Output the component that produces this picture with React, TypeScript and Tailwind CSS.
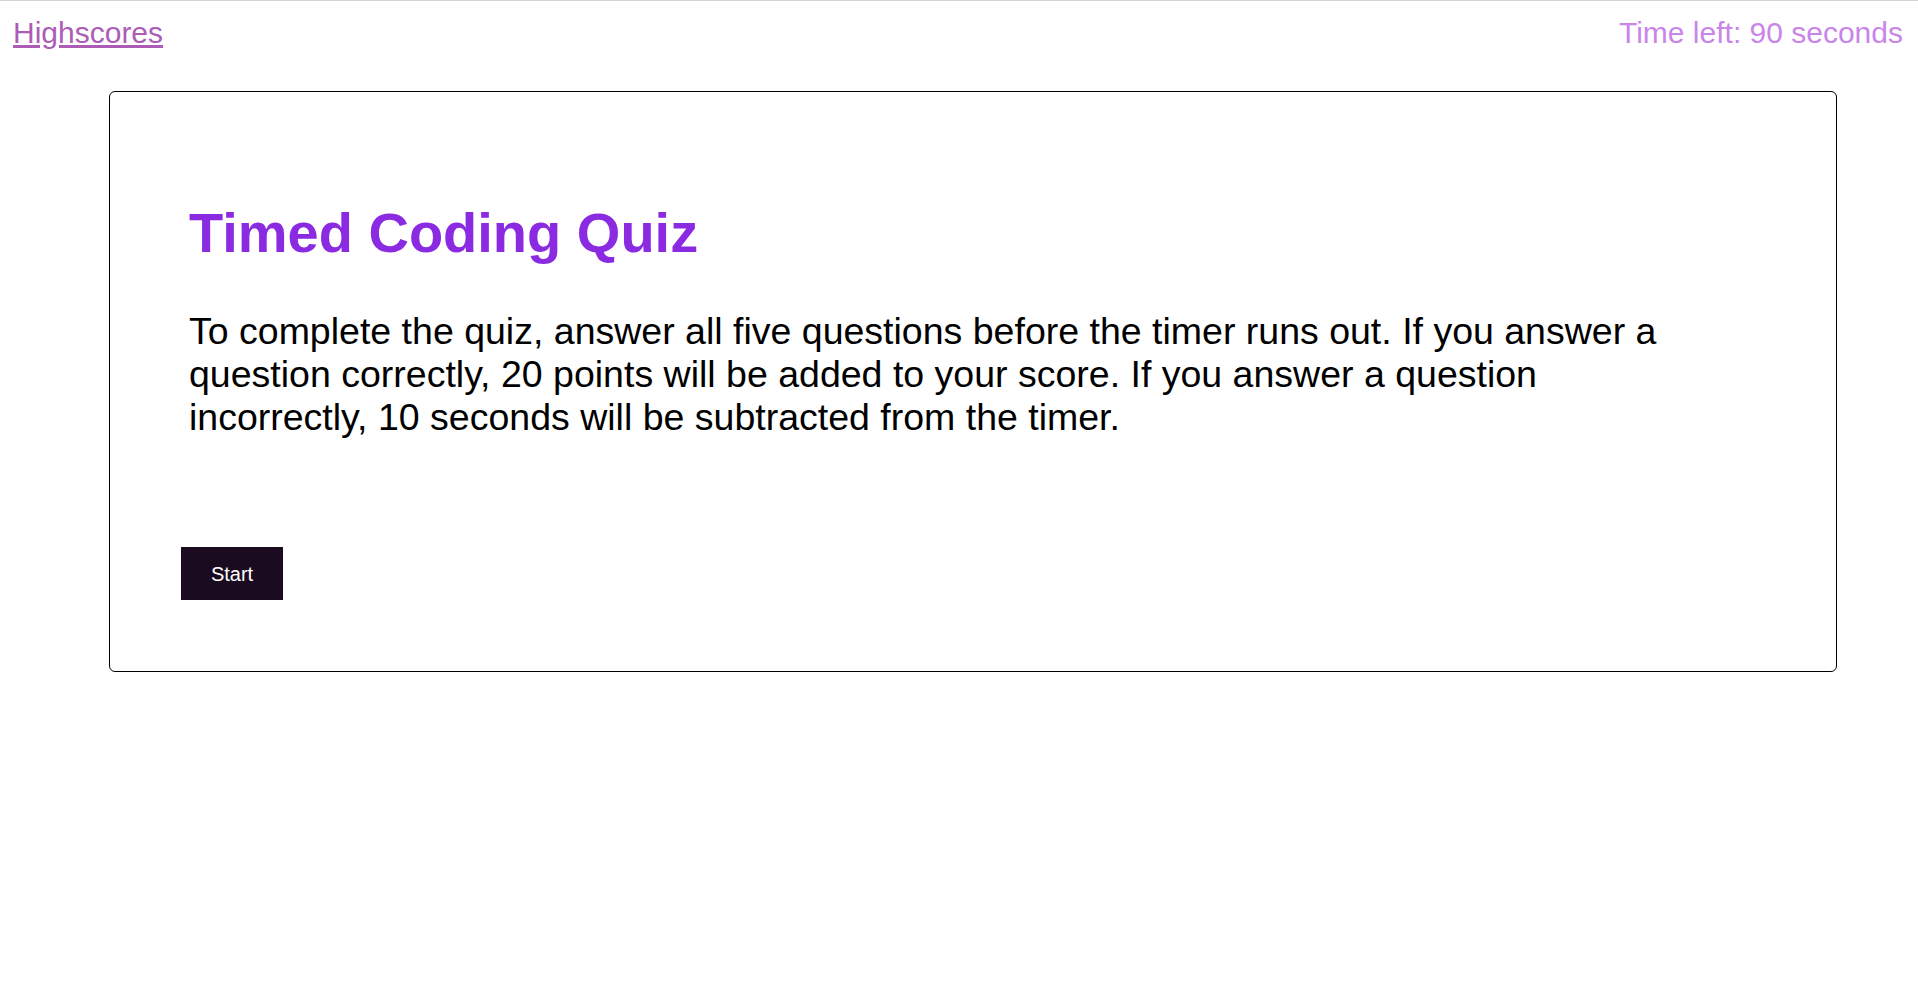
import React from "react";

export default function App() {
  return (
    <div
      className="min-h-[987px] w-full bg-white text-black"
      style={{ fontFamily: '"Liberation Sans", Arial, Helvetica, sans-serif' }}
    >
      <header className="flex items-baseline justify-between border-t border-[#d4d4d4] pl-[13px] pr-[15px] pt-[14px]">
        <a href="#" className="text-[30px] leading-[35px] text-[#ad5cb6] underline">
          Highscores
        </a>
        <div className="text-[30px] leading-[35px] text-[#c985ea]">Time left: 90 seconds</div>
      </header>

      <main className="ml-[109px] mt-[41px] h-[581px] w-[1728px] rounded-[6px] border border-black pl-[79px] pt-[109px]">
        <h1 className="text-[56px] font-bold leading-[64px] text-[#8a2be2]">Timed Coding Quiz</h1>
        <p className="mt-[45px] w-[1500px] text-[37.5px] leading-[43px] text-black">
          To complete the quiz, answer all five questions before the timer runs out. If you answer a
          question correctly, 20 points will be added to your score. If you answer a question
          incorrectly, 10 seconds will be subtracted from the timer.
        </p>
        <button className="-ml-2 mt-[108px] flex h-[53px] w-[102px] items-center justify-center bg-[#1b0b21] text-[20px] text-white">
          Start
        </button>
      </main>
    </div>
  );
}
